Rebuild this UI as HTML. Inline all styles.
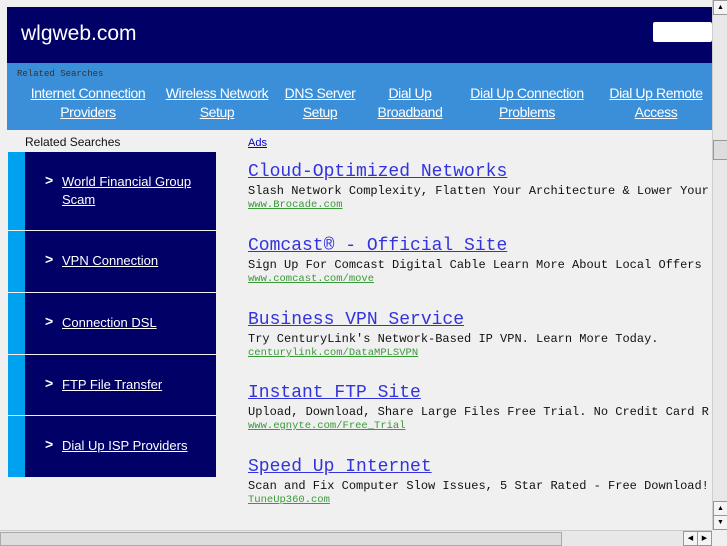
<!DOCTYPE html>
<html><head><style>
body{margin:0;width:727px;height:545px;background:#f0f0f0;overflow:hidden;position:relative;font-family:"Liberation Sans",sans-serif}
#hdr{position:absolute;left:7px;top:7px;width:705px;height:56px;background:#000066}
#hdr .t{position:absolute;left:14px;top:15px;color:#fff;font-size:21px}
#hdr .box{position:absolute;left:646px;top:15px;width:59px;height:20px;background:#fff;border-radius:2px}
#bar{position:absolute;left:7px;top:63px;width:705px;height:67px;background:#3b8fd8}
#bar .rs{position:absolute;left:10px;top:6px;font:9px "Liberation Mono",monospace;color:#333}
#bar a{position:absolute;top:21px;color:#fff;font-size:14px;letter-spacing:-0.4px;white-space:nowrap;text-align:center;line-height:19px;text-decoration:underline}
.lh{position:absolute;left:25px;top:135px;font-size:12px;color:#111}
.side{position:absolute;left:8px;width:191px;background:#000066;border-left:17px solid #00a2f0}
.side a{position:absolute;left:37px;color:#fff;font-size:13px;text-decoration:underline;line-height:18px}
.side b{position:absolute;left:20px;color:#fff;font-size:14px}
.ads{position:absolute;left:248px;top:137px;font-size:11px;color:#00c;text-decoration:underline}
.ad{position:absolute;left:248px;font-family:"Liberation Mono",monospace;white-space:nowrap}
.ad .h{color:#3333dd;font-size:18px;text-decoration:underline;line-height:21px}
.ad .d{font-size:12px;color:#111;margin-top:1px;line-height:15px}
.ad .u{font-size:10.5px;color:#3a9a3a;text-decoration:underline;line-height:13px}
.vs{position:absolute;left:712px;top:0;width:15px;height:530px;background:#e8e8e8;border-left:1px solid #ccc}
.hs{position:absolute;left:0;top:530px;width:712px;height:15px;background:#e8e8e8;border-top:1px solid #ccc}
.btn{position:absolute;width:13px;height:13px;background:#f4f4f4;border:1px solid #999;font-size:7px;text-align:center;line-height:13px}
</style></head><body>
<div id="hdr"><div class="t">wlgweb.com</div><div class="box"></div></div>
<div id="bar"><div class="rs">Related Searches</div>
<a style="left:16px;width:130px">Internet Connection<br>Providers</a>
<a style="left:155px;width:110px">Wireless Network<br>Setup</a>
<a style="left:273px;width:80px">DNS Server<br>Setup</a>
<a style="left:368px;width:70px">Dial Up<br>Broadband</a>
<a style="left:456px;width:128px">Dial Up Connection<br>Problems</a>
<a style="left:596px;width:106px">Dial Up Remote<br>Access</a>
</div>
<div class="lh">Related Searches</div>
<div class="side" style="top:152px;height:78px"><b style="top:20px">&gt;</b><a style="top:21px">World Financial Group<br>Scam</a></div>
<div class="side" style="top:231px;height:61px"><b style="top:20px">&gt;</b><a style="top:21px">VPN Connection</a></div>
<div class="side" style="top:293px;height:61px"><b style="top:20px">&gt;</b><a style="top:21px">Connection DSL</a></div>
<div class="side" style="top:355px;height:60px"><b style="top:20px">&gt;</b><a style="top:21px">FTP File Transfer</a></div>
<div class="side" style="top:416px;height:61px"><b style="top:20px">&gt;</b><a style="top:21px">Dial Up ISP Providers</a></div>
<div class="ads">Ads</div>
<div class="ad" style="top:162px"><div class="h">Cloud-Optimized Networks</div><div class="d">Slash Network Complexity, Flatten Your Architecture &amp; Lower Your</div><div class="u">www.Brocade.com</div></div>
<div class="ad" style="top:236px"><div class="h">Comcast® - Official Site</div><div class="d">Sign Up For Comcast Digital Cable Learn More About Local Offers</div><div class="u">www.comcast.com/move</div></div>
<div class="ad" style="top:310px"><div class="h">Business VPN Service</div><div class="d">Try CenturyLink's Network-Based IP VPN. Learn More Today.</div><div class="u">centurylink.com/DataMPLSVPN</div></div>
<div class="ad" style="top:383px"><div class="h">Instant FTP Site</div><div class="d">Upload, Download, Share Large Files Free Trial. No Credit Card R</div><div class="u">www.egnyte.com/Free_Trial</div></div>
<div class="ad" style="top:457px"><div class="h">Speed Up Internet</div><div class="d">Scan and Fix Computer Slow Issues, 5 Star Rated - Free Download!</div><div class="u">TuneUp360.com</div></div>
<div class="vs"><div class="btn" style="left:0;top:0">▲</div><div class="btn" style="left:0;top:140px;height:18px;background:#ddd"></div><div class="btn" style="left:0;top:501px">▲</div><div class="btn" style="left:0;top:515px">▼</div></div>
<div class="hs"><div style="position:absolute;left:0;top:1px;width:560px;height:12px;background:#ddd;border:1px solid #aaa"></div><div class="btn" style="left:683px;top:0">◀</div><div class="btn" style="left:697px;top:0">▶</div></div>
</body></html>
